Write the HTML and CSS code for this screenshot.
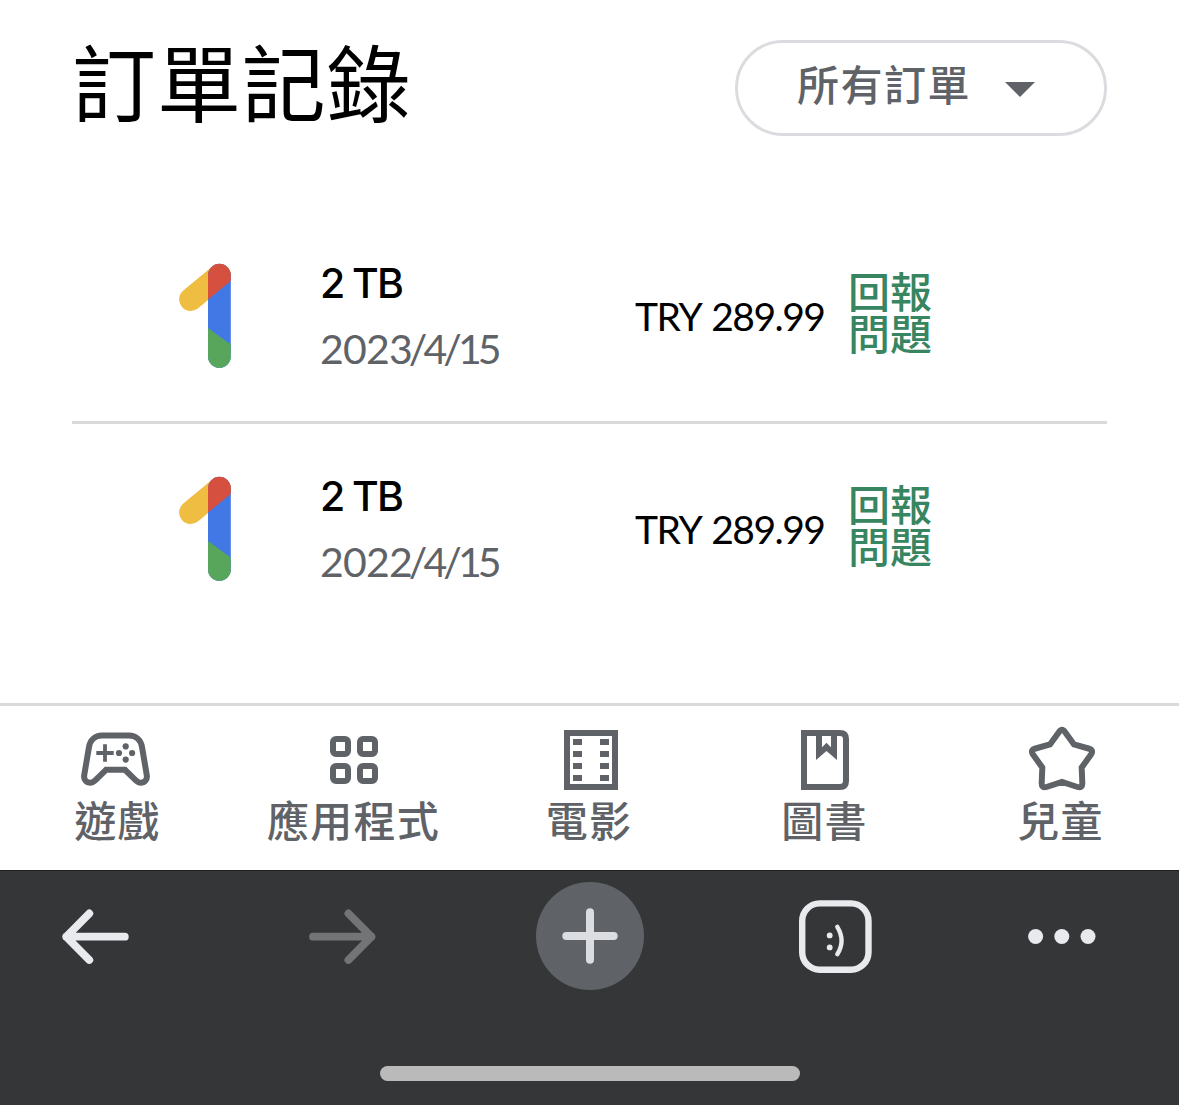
FILE: index.html
```html
<!DOCTYPE html>
<html lang="zh-Hant">
<head>
<meta charset="utf-8">
<title>訂單記錄</title>
<link rel="stylesheet" href="styles.css">
</head>
<body>
<svg class="defs" aria-hidden="true">
  <defs>
    <clipPath id="bar"><rect x="33" y="3.8" width="22.8" height="104" rx="11.4"/></clipPath>
    <symbol id="one" viewBox="0 0 60 112">
      <path d="M15.7 39.4 44.4 15.6" stroke="#efbd41" stroke-width="23.2" stroke-linecap="round"/>
      <g clip-path="url(#bar)">
        <path d="M33 0h23v112H33z" fill="#4278e6"/>
        <path d="M33 0h23v20.8L33 39.6z" fill="#d6503f"/>
        <path d="M33 68 56 84.8V112H33z" fill="#58a55c"/>
      </g>
    </symbol>
  </defs>
</svg>
<main class="page">
  <header class="header">
    <h1 class="title">訂單記錄</h1>
    <button class="filter"><span class="filter-label">所有訂單</span><svg class="caret" width="30" height="15" viewBox="0 0 30 15"><path d="M0 0h30L15 15z" fill="#5f6368"/></svg></button>
  </header>
  <section class="orders">
    <article class="order">
      <svg class="logo" width="60" height="112"><use href="#one"/></svg>
      <div class="info"><div class="name">2 TB</div><div class="date">202<span class="tight">3/4/1</span>5</div></div>
      <div class="price">TRY 289.99</div>
      <a class="report">回報<br>問題</a>
    </article>
    <article class="order">
      <svg class="logo" width="60" height="112"><use href="#one"/></svg>
      <div class="info"><div class="name">2 TB</div><div class="date">202<span class="tight">2/4/1</span>5</div></div>
      <div class="price">TRY 289.99</div>
      <a class="report">回報<br>問題</a>
    </article>
  </section>
</main>
<nav class="tabs">
  <a class="tab">
    <svg width="80" height="72" viewBox="0 0 80 72" fill="none">
      <path d="M28 45.8 18 55.6C16 57.5 14.5 58.8 12.5 58.8 8.3 58.8 5.5 55.5 6.2 51.3L11 23C12.2 16 17 11.5 24 11.5H51C58 11.5 62.8 16 64 23L68.8 51.3C69.5 55.5 66.7 58.8 62.5 58.8 60.5 58.8 59 57.5 57 55.6L47 45.8Z" stroke="#5f6368" stroke-width="6"/>
      <path d="M18.3 29h17.4M27 20.3v17.4" stroke="#5f6368" stroke-width="3.8"/>
      <g fill="#5f6368"><circle cx="47.7" cy="22.4" r="3.1"/><circle cx="41" cy="29" r="3.1"/><circle cx="54.1" cy="29" r="3.1"/><circle cx="47.7" cy="35.6" r="3.1"/></g>
    </svg>
    <span>遊戲</span>
  </a>
  <a class="tab">
    <svg width="80" height="72" viewBox="0 0 80 72" fill="none" stroke="#5f6368" stroke-width="6">
      <rect x="19" y="15" width="15" height="15" rx="3"/><rect x="46" y="15" width="15" height="15" rx="3"/>
      <rect x="19" y="42" width="15" height="15" rx="3"/><rect x="46" y="42" width="15" height="15" rx="3"/>
    </svg>
    <span>應用程式</span>
  </a>
  <a class="tab">
    <svg width="81" height="72" viewBox="0 0 81 72" fill="none">
      <rect x="18" y="9" width="48" height="54" stroke="#5f6368" stroke-width="6"/>
      <path d="M24 15h9v6h-9zM24 27h9v6h-9zM24 39h9v6h-9zM24 51h9v6h-9zM51 15h9v6h-9zM51 27h9v6h-9zM51 39h9v6h-9zM51 51h9v6h-9z" fill="#5f6368"/>
    </svg>
    <span>電影</span>
  </a>
  <a class="tab">
    <svg width="80" height="72" viewBox="0 0 80 72" fill="none">
      <path d="M19 9H55Q61 9 61 15V57Q61 63 55 63H19Z" stroke="#5f6368" stroke-width="6"/>
      <path d="M31 6V36L41.5 27 52 36V6H46V23.2L41.5 18.8 37 23.2V6Z" fill="#5f6368"/>
    </svg>
    <span>圖書</span>
  </a>
  <a class="tab">
    <svg width="80" height="72" viewBox="0 0 80 72" fill="none">
      <path d="M38 8Q41 3.5 44 8L53 20.5 67.5 24.5Q73 26 70 30.5L60.7 43.5 61.3 59Q61.5 64.5 56.5 63L41 58 25.5 63Q20.5 64.5 20.7 59L21.3 43.5 12 30.5Q9 26 14.5 24.5L29 20.5Z" stroke="#5f6368" stroke-width="6"/>
    </svg>
    <span>兒童</span>
  </a>
</nav>
<footer class="browser">
  <div class="tools">
    <svg width="67" height="58" viewBox="0 0 67 58" fill="none" stroke="#e8eaed" stroke-width="7.8" stroke-linecap="round" stroke-linejoin="round"><path d="M27.3 6.5 4.3 29.7 27.3 52.9M4.3 29.7H62.8"/></svg>
    <svg width="67" height="58" viewBox="0 0 67 58" fill="none" stroke="#737476" stroke-width="7.8" stroke-linecap="round" stroke-linejoin="round"><path d="M39.4 6.5 62.4 29.7 39.4 52.9M62.4 29.7H4"/></svg>
    <div class="new"><svg width="56" height="56" viewBox="0 0 56 56" stroke="#dcdde1" stroke-width="8" stroke-linecap="round"><path d="M4.3 28H51.7M28 4.3V51.7"/></svg></div>
    <svg width="73" height="73" viewBox="0 0 73 73" fill="none"><rect x="3.2" y="3.4" width="66.3" height="66.3" rx="17.5" stroke="#e8eaed" stroke-width="6.4"/><circle cx="30.7" cy="35.4" r="2.9" fill="#e8eaed"/><circle cx="30.7" cy="47.4" r="2.9" fill="#e8eaed"/><path d="M38.3 26.8Q46.8 40.8 38.3 54.2" stroke="#e8eaed" stroke-width="4.4" stroke-linecap="round"/></svg>
    <svg width="68" height="18" viewBox="0 0 68 18" fill="#e8eaed"><circle cx="7.6" cy="9.5" r="7.5"/><circle cx="33.8" cy="9.5" r="7.5"/><circle cx="60" cy="9.5" r="7.5"/></svg>
  </div>
  <div class="home"></div>
</footer>
</body>
</html>
```
FILE: styles.css
```css
* { box-sizing: border-box; }
body {
  margin: 0;
  width: 1179px;
  height: 1105px;
  overflow: hidden;
  display: flex;
  flex-direction: column;
  background: #fff;
  color: #000;
  font-family: Lato, "Noto Sans CJK TC", sans-serif;
}
svg { display: block; flex: none; }
.defs { width: 0; height: 0; position: absolute; }
.page { height: 703px; padding: 40px 72px 0; }
.header {
  height: 171px;
  display: flex;
  justify-content: space-between;
  align-items: flex-start;
}
.title {
  margin: 0;
  font: 400 84px/80px "Noto Sans CJK TC", sans-serif;
  letter-spacing: .9px;
}
.filter {
  width: 372px;
  height: 96px;
  padding: 0 69px 0 59px;
  border: 3px solid #dadce0;
  border-radius: 48px;
  background: #fff;
  display: flex;
  align-items: center;
  justify-content: space-between;
  color: #5f6368;
}
.filter-label {
  font: 500 42px/60px "Noto Sans CJK TC", sans-serif;
  letter-spacing: 1.5px;
  padding-bottom: 11px;
}
.caret { margin-top: 3px; }
.order {
  height: 213px;
  padding-left: 103px;
  display: grid;
  grid-template-columns: 145px 315px 213px 90px;
  align-items: center;
}
.order:first-child { border-bottom: 3px solid #dadada; }
.order:last-child { padding-bottom: 3px; }
.info { display: flex; flex-direction: column; gap: 6px; }
.name {
  font: 500 41px/60px Inter, sans-serif;
  letter-spacing: -1.8px;
  word-spacing: -.5px;
}
.date {
  font-size: 41px;
  line-height: 60px;
  letter-spacing: -.8px;
  color: #5f6368;
}
.tight { letter-spacing: -3.9px; }
.price {
  font-size: 39px;
  line-height: 60px;
  letter-spacing: -1.5px;
  word-spacing: 3px;
}
.report {
  font: 500 42px/42px "Noto Sans CJK TC", sans-serif;
  padding-bottom: 11px;
  color: #388561;
}
.tabs {
  height: 167px;
  border-top: 3px solid #dadada;
  padding-top: 18px;
  display: grid;
  grid-template-columns: 236px 236px 235px 236px 236px;
}
.tab {
  display: flex;
  flex-direction: column;
  align-items: center;
  color: #5f6368;
  font: 500 42px/46px "Noto Sans CJK TC", sans-serif;
  letter-spacing: 1.2px;
}
.tab span { margin-right: 1px; }
.browser {
  height: 235px;
  border-top: 1px solid #1e1f21;
  background: #353638;
  display: flex;
  flex-direction: column;
  align-items: center;
  justify-content: space-between;
  padding: 11px 0 24px;
}
.tools {
  width: 100%;
  height: 108px;
  padding-left: 62px;
  display: grid;
  grid-template-columns: 247px 227px 263px 229px 68px;
  align-items: center;
}
.new {
  width: 108px;
  height: 108px;
  border-radius: 50%;
  background: #5f6267;
  display: grid;
  place-items: center;
}
.home { width: 420px; height: 15px; border-radius: 8px; background: #bababa; }
```
